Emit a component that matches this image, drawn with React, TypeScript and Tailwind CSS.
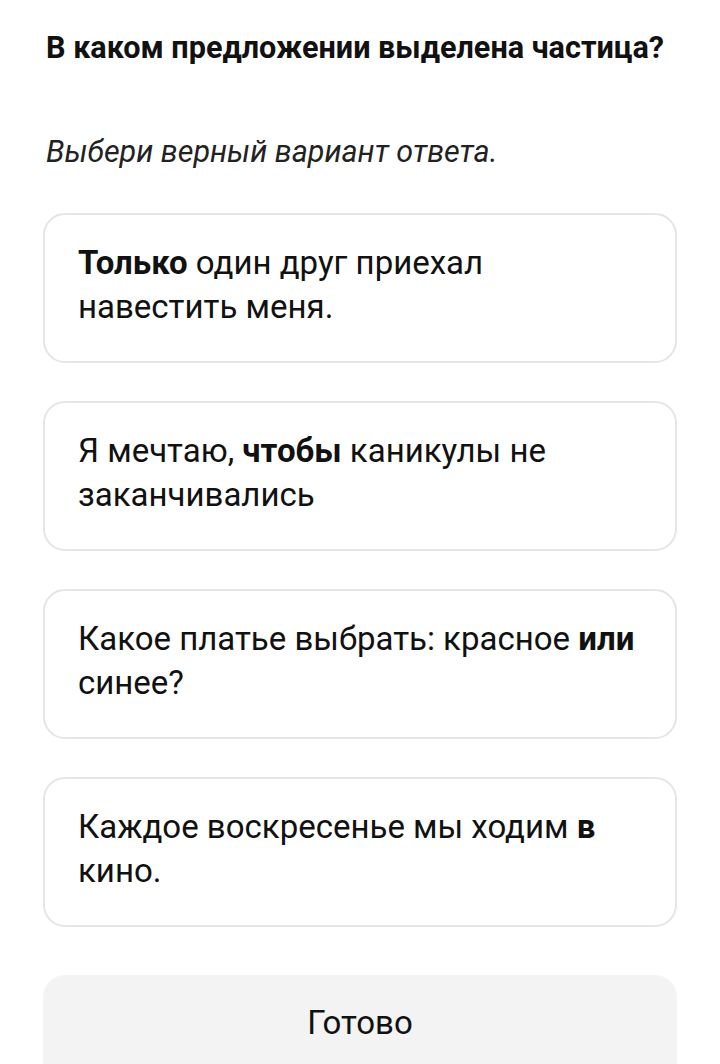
import React from "react";

const font = { fontFamily: "Roboto, 'Noto Sans', sans-serif" };

function Card({ children }: { children: React.ReactNode }) {
  return (
    <div className="h-[150px] rounded-[22px] border-2 border-[#e5e5e5] px-[33px] flex items-center">
      <div className="-mt-[6px] text-[33px] leading-[44px] text-[#111]">{children}</div>
    </div>
  );
}

export default function App() {
  return (
    <div className="w-[720px] h-[1064px] overflow-hidden bg-white px-[43px]" style={font}>
      <h1 className="pt-[31px] pl-[3px] text-[30.6px] leading-[34px] font-bold text-[#111] whitespace-nowrap">
        В каком предложении выделена частица?
      </h1>
      <p className="mt-[70px] pl-[3px] text-[30.5px] leading-[34px] italic text-[#222] whitespace-nowrap">
        Выбери верный вариант ответа.
      </p>
      <div className="mt-[44px] flex flex-col gap-[38px]">
        <Card>
          <b>Только</b> один друг приехал
          <br />
          навестить меня.
        </Card>
        <Card>
          Я мечтаю, <b>чтобы</b> каникулы не
          <br />
          заканчивались
        </Card>
        <Card>
          <span className="whitespace-nowrap">
            Какое платье выбрать: красное <b>или</b>
          </span>
          <br />
          синее?
        </Card>
        <Card>
          Каждое воскресенье мы ходим <b>в</b>
          <br />
          кино.
        </Card>
      </div>
      <div className="mt-[48px] h-[120px] rounded-[22px] bg-[#f3f3f3] flex justify-center pt-[26px]">
        <span className="text-[33px] leading-[44px] text-[#111]">Готово</span>
      </div>
    </div>
  );
}
